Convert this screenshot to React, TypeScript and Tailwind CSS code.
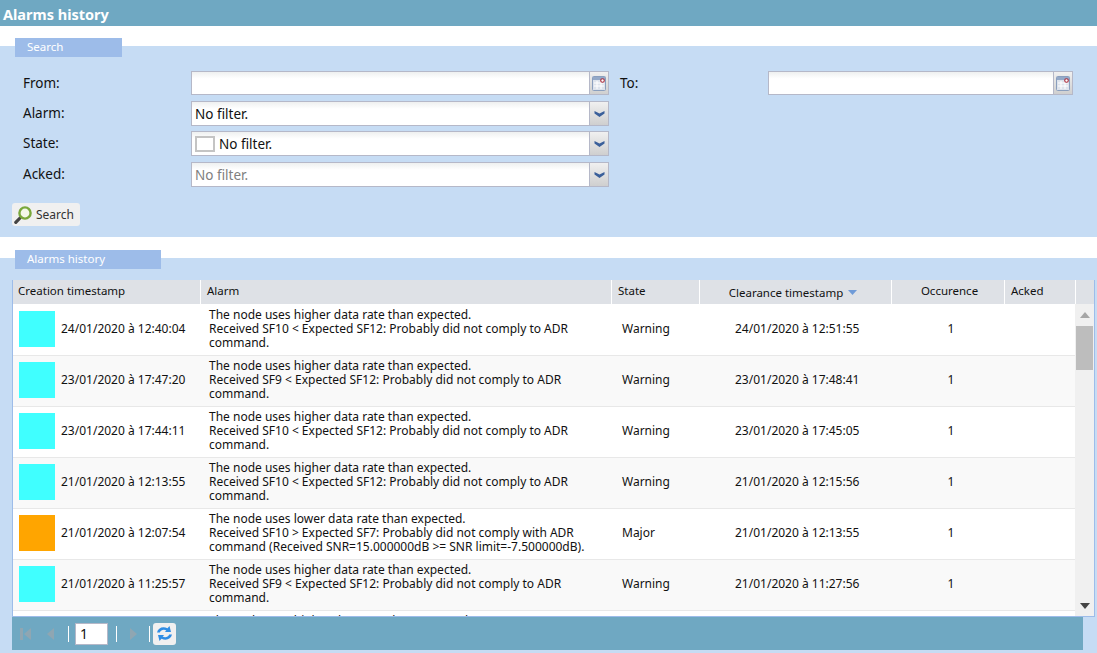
import React from 'react'

const higher = (sf: string) => [
  'The node uses higher data rate than expected.',
  `Received ${sf} < Expected SF12: Probably did not comply to ADR`,
  'command.',
]

const rows = [
  { color: 'bg-[#40ffff]', created: '24/01/2020 à 12:40:04', alarm: higher('SF10'), state: 'Warning', cleared: '24/01/2020 à 12:51:55' },
  { color: 'bg-[#40ffff]', created: '23/01/2020 à 17:47:20', alarm: higher('SF9'), state: 'Warning', cleared: '23/01/2020 à 17:48:41' },
  { color: 'bg-[#40ffff]', created: '23/01/2020 à 17:44:11', alarm: higher('SF10'), state: 'Warning', cleared: '23/01/2020 à 17:45:05' },
  { color: 'bg-[#40ffff]', created: '21/01/2020 à 12:13:55', alarm: higher('SF10'), state: 'Warning', cleared: '21/01/2020 à 12:15:56' },
  {
    color: 'bg-[#ffa500]',
    created: '21/01/2020 à 12:07:54',
    alarm: [
      'The node uses lower data rate than expected.',
      'Received SF10 > Expected SF7: Probably did not comply with ADR',
      'command (Received SNR=15.000000dB >= SNR limit=-7.500000dB).',
    ],
    state: 'Major',
    cleared: '21/01/2020 à 12:13:55',
  },
  { color: 'bg-[#40ffff]', created: '21/01/2020 à 11:25:57', alarm: higher('SF9'), state: 'Warning', cleared: '21/01/2020 à 11:27:56' },
  { color: 'bg-[#40ffff]', created: '21/01/2020 à 11:20:12', alarm: higher('SF9'), state: 'Warning', cleared: '21/01/2020 à 11:22:41' },
]

function CalendarIcon() {
  return (
    <svg width="14" height="15" viewBox="0 0 14 15">
      <rect x="0.5" y="0.5" width="13" height="14" rx="1" fill="#dde3ec" stroke="#8a9fbe" />
      <rect x="1" y="1" width="12" height="3" fill="#94a9c8" />
      <path d="M2 7h10M2 10h10M5 5v8M9 5v8" stroke="#fff" strokeWidth="1" />
      <circle cx="10.5" cy="4.5" r="1.8" fill="#fff" stroke="#a82838" strokeWidth="1.1" />
    </svg>
  )
}

function ChevronIcon() {
  return (
    <svg width="11" height="8" viewBox="0 0 11 8">
      <path d="M0.5 1 L5.5 3.4 L10.5 1 L10.5 3.4 L5.5 7 L0.5 3.4 Z" fill="#3a5f9a" />
    </svg>
  )
}

function SearchIcon() {
  return (
    <svg width="19" height="20" viewBox="0 0 19 20">
      <path d="M6 13 L1.8 17.4" stroke="#444" strokeWidth="3.2" strokeLinecap="round" />
      <circle cx="11" cy="8" r="5.6" fill="#f4f8ea" stroke="#7aa83c" strokeWidth="2.4" />
    </svg>
  )
}

function RefreshIcon() {
  return (
    <svg width="19" height="19" viewBox="0 0 19 19">
      <path d="M2 8.5 C3 4 7.5 2 12.5 4.2 L14.5 2 L16 8 L9.8 8 L11.4 6.4 C8.5 5 6 6 4.8 8.5 Z" fill="#2f8de4" />
      <path d="M17 10.5 C16 15 11.5 17 6.5 14.8 L4.5 17 L3 11 L9.2 11 L7.6 12.6 C10.5 14 13 13 14.2 10.5 Z" fill="#2f8de4" />
    </svg>
  )
}

function FirstIcon() {
  return (
    <svg width="12" height="14" viewBox="0 0 12 14">
      <rect x="0" y="1" width="3" height="12" fill="#8fa6b2" />
      <path d="M11 1 V13 L4 7 Z" fill="#8fa6b2" />
    </svg>
  )
}

function PrevIcon() {
  return (
    <svg width="7" height="12" viewBox="0 0 7 12">
      <path d="M7 0 V12 L0 6 Z" fill="#8fa6b2" />
    </svg>
  )
}

function NextIcon() {
  return (
    <svg width="8" height="12" viewBox="0 0 8 12">
      <path d="M1 0 V12 L8 6 Z" fill="#8fa6b2" />
    </svg>
  )
}

function Legend({ title, width }: { title: string; width: string }) {
  return (
    <div className={`${width} h-[19px] -mt-2 ml-[15px] pl-3 bg-[#9dbce9] text-white text-[11.5px] leading-[17px]`}>
      {title}
    </div>
  )
}

function Field({ width, height = 'h-[25px]', button, children }: { width: string; height?: string; button: React.ReactNode; children?: React.ReactNode }) {
  return (
    <div className={`${width} ${height} flex border border-[#b5b8c8] bg-white`}>
      <div className="flex-1 flex items-center pl-[3px] pt-px text-[13.5px] bg-gradient-to-b from-[#eef0f0] to-white to-[30%]">{children}</div>
      <div className="w-[19px] flex items-center justify-center border-l border-[#b5b8c8] bg-gradient-to-b from-[#f0f0f0] to-[#cfcfcf]">{button}</div>
    </div>
  )
}

function FormRow({ label, children }: { label: string; children: React.ReactNode }) {
  return (
    <div className="flex items-center">
      <div className="w-[168px] text-[13.5px] text-[#111]">{label}</div>
      {children}
    </div>
  )
}

export default function App() {
  return (
    <div className="w-[1097px] h-[653px] overflow-hidden bg-white flex flex-col font-['Noto_Sans',sans-serif] text-[#111]">
      <div className="h-[26px] shrink-0 pl-[3px] bg-[#6fa8c2] text-white font-bold text-[14.5px] leading-[28px]">Alarms history</div>

      <div className="h-[191px] shrink-0 mt-5 bg-[#c6dcf4]">
        <Legend title="Search" width="w-[107px]" />
        <div className="flex flex-col gap-[5px] pl-[23px] pt-[14px]">
          <div className="flex items-center mb-px">
            <FormRow label="From:">
              <Field width="w-[418px]" height="h-[24px]" button={<CalendarIcon />} />
            </FormRow>
            <div className="w-[159px] pl-[11px] text-[13.5px]">To:</div>
            <Field width="w-[305px]" height="h-[24px]" button={<CalendarIcon />} />
          </div>
          <FormRow label="Alarm:">
            <Field width="w-[418px]" button={<ChevronIcon />}>No filter.</Field>
          </FormRow>
          <FormRow label="State:">
            <Field width="w-[418px]" button={<ChevronIcon />}>
              <span className="w-5 h-[16px] mr-1 border-2 border-[#c4c4c4] bg-white" />
              No filter.
            </Field>
          </FormRow>
          <div className="mt-px">
            <FormRow label="Acked:">
              <Field width="w-[418px]" button={<ChevronIcon />}>
                <span className="text-[#808080]">No filter.</span>
              </Field>
            </FormRow>
          </div>
        </div>
        <button className="ml-3 mt-4 w-[68px] h-[23px] flex items-center gap-[3px] pl-[2px] rounded-[3px] bg-[#f0f0f0] text-[12px] text-[#333]">
          <SearchIcon />
          Search
        </button>
      </div>

      <div className="flex-1 mt-[21px] bg-[#c6dcf4] flex flex-col">
        <Legend title="Alarms history" width="w-[146px]" />
        <div className="mt-[11px] ml-3 w-[1083px] flex flex-col border-r border-b border-l border-[#9dbce9] text-[12px]">
          <div className="h-6 flex bg-[#dee1e6] leading-[21px] text-[11.5px]">
            <div className="w-[188px] pl-[5px] border-r border-white">Creation timestamp</div>
            <div className="w-[411px] pl-[6px] border-r border-white">Alarm</div>
            <div className="w-[88px] pl-[6px] border-r border-white">State</div>
            <div className="w-[192px] flex items-center justify-center gap-[5px] pr-[5px] border-r border-white">
              Clearance timestamp
              <svg width="9" height="5" viewBox="0 0 9 5"><path d="M0 0 H9 L4.5 5 Z" fill="#6f9bd8" /></svg>
            </div>
            <div className="w-[113px] pl-[3px] text-center border-r border-white">Occurence</div>
            <div className="w-[71px] pl-[6px] border-r border-white">Acked</div>
            <div className="flex-1" />
          </div>
          <div className="h-[312px] flex">
            <div className="w-[1062px] overflow-hidden pt-px bg-white">
              {rows.map((row, i) => (
                <div key={i} className={`h-[51px] pb-[2px] flex items-center border-b border-[#e8e8e8] ${i % 2 ? 'bg-[#f9f9f9]' : 'bg-white'}`}>
                  <div className="w-[188px] flex items-center pl-[6px] gap-[6px]">
                    <div className={`w-9 h-9 ${row.color}`} />
                    {row.created}
                  </div>
                  <div className="w-[411px] pl-2 leading-[14px]">
                    {row.alarm.map(line => <div key={line}>{line}</div>)}
                  </div>
                  <div className="w-[88px] pl-[10px]">{row.state}</div>
                  <div className="w-[192px] pl-[35px]">{row.cleared}</div>
                  <div className="w-[113px] pl-[5px] text-center">1</div>
                  <div className="w-[70px]" />
                </div>
              ))}
            </div>
            <div className="flex-1 flex flex-col items-center bg-[#f0f0f0]">
              <svg className="mt-2" width="10" height="6" viewBox="0 0 10 6"><path d="M5 0 L10 6 H0 Z" fill="#a6a6a6" /></svg>
              <div className="mt-2 w-[17px] h-[44px] bg-[#bdbdbd]" />
              <div className="flex-1" />
              <svg className="mb-[7px]" width="10" height="6" viewBox="0 0 10 6"><path d="M0 0 H10 L5 6 Z" fill="#444" /></svg>
            </div>
          </div>
        </div>
        <div className="ml-3 w-[1071px] h-[33px] flex items-center bg-[#6fa8c2]">
          <div className="ml-2"><FirstIcon /></div>
          <div className="ml-[15px]"><PrevIcon /></div>
          <div className="ml-[14px] w-px h-4 bg-white" />
          <div className="ml-[6px] w-[33px] h-[22px] border border-[#b5b8c8] bg-white pl-1 text-[14px] leading-[20px]">1</div>
          <div className="ml-2 w-px h-4 bg-white" />
          <div className="ml-3"><NextIcon /></div>
          <div className="ml-3 w-px h-4 bg-white" />
          <div className="ml-[3px] w-[23px] h-[22px] flex items-center justify-center rounded-[3px] bg-[#f0f0f0]"><RefreshIcon /></div>
        </div>
      </div>
    </div>
  )
}
